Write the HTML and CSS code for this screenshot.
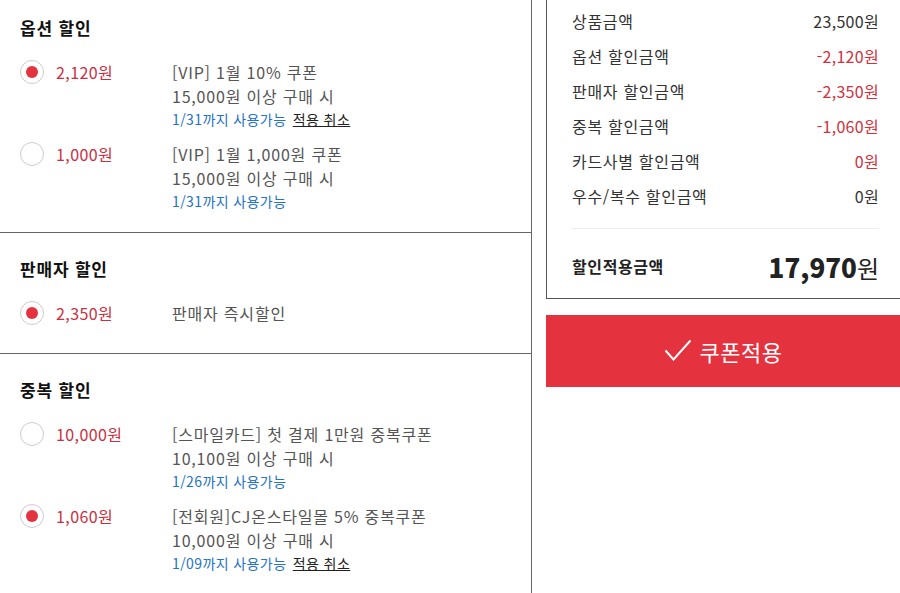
FILE: index.html
```html
<!DOCTYPE html>
<html lang="ko">
  <head>
    <meta charset="utf-8">
    <title>쿠폰 적용</title>
    <link rel="stylesheet" href="styles.css">
  </head>
  <body>
    <div class="page">
      <div class="coupons">
        <div class="section">
          <h3 class="section-title">옵션 할인</h3>
          <div class="item">
            <span class="radio checked"></span>
            <div class="amount">2,120원</div>
            <div class="desc">
              <div class="desc-name">[VIP] 1월 10% 쿠폰</div>
              <div class="desc-name">15,000원 이상 구매 시</div>
              <div class="desc-date">1/31까지 사용가능 <a class="cancel" href="#">적용 취소</a></div>
            </div>
          </div>
          <div class="item">
            <span class="radio"></span>
            <div class="amount">1,000원</div>
            <div class="desc">
              <div class="desc-name">[VIP] 1월 1,000원 쿠폰</div>
              <div class="desc-name">15,000원 이상 구매 시</div>
              <div class="desc-date">1/31까지 사용가능</div>
            </div>
          </div>
        </div>
        <div class="section">
          <h3 class="section-title">판매자 할인</h3>
          <div class="item">
            <span class="radio checked"></span>
            <div class="amount">2,350원</div>
            <div class="desc">
              <div class="desc-name">판매자 즉시할인</div>
            </div>
          </div>
        </div>
        <div class="section">
          <h3 class="section-title">중복 할인</h3>
          <div class="item">
            <span class="radio"></span>
            <div class="amount">10,000원</div>
            <div class="desc">
              <div class="desc-name">[스마일카드] 첫 결제 1만원 중복쿠폰</div>
              <div class="desc-name">10,100원 이상 구매 시</div>
              <div class="desc-date">1/26까지 사용가능</div>
            </div>
          </div>
          <div class="item">
            <span class="radio checked"></span>
            <div class="amount">1,060원</div>
            <div class="desc">
              <div class="desc-name">[전회원]CJ온스타일몰 5% 중복쿠폰</div>
              <div class="desc-name">10,000원 이상 구매 시</div>
              <div class="desc-date">1/09까지 사용가능 <a class="cancel" href="#">적용 취소</a></div>
            </div>
          </div>
        </div>
      </div>

      <div class="side">
        <div class="summary">
          <ul class="summary-list">
            <li><span>상품금액</span><span>23,500원</span></li>
            <li><span>옵션 할인금액</span><span class="minus">-2,120원</span></li>
            <li><span>판매자 할인금액</span><span class="minus">-2,350원</span></li>
            <li><span>중복 할인금액</span><span class="minus">-1,060원</span></li>
            <li><span>카드사별 할인금액</span><span class="minus">0원</span></li>
            <li><span>우수/복수 할인금액</span><span>0원</span></li>
          </ul>
          <div class="total">
            <span class="total-label">할인적용금액</span>
            <span class="total-price"><strong>17,970</strong>원</span>
          </div>
        </div>
        <button class="apply" type="button">
          <svg class="apply-check" width="28" height="23" viewBox="0 0 28 23">
            <polyline points="1.5,11.5 9.5,20.5 26.5,1.5" fill="none" stroke="#fff" stroke-width="2"/>
          </svg>
          쿠폰적용
        </button>
      </div>
    </div>
  </body>
</html>
```

FILE: styles.css
```css
html, body { margin: 0; padding: 0; background: #fff; overflow: hidden; }
body { font-family: "Noto Sans CJK KR", "Noto Sans", sans-serif; color: #333; }

.page { display: flex; align-items: flex-start; width: 920px; margin-top: -8px; }

/* left: coupon list */
.coupons { width: 531px; border-right: 1px solid #666; min-height: 640px; }
.section { padding: 24px 20px 20px; border-bottom: 1px solid #666; }
.section:last-child { border-bottom: none; }
.section-title { margin: 0 0 20px; font-size: 17px; line-height: 24px; font-weight: bold; color: #111; letter-spacing: 0.8px; }

.item { display: flex; align-items: flex-start; min-height: 32px; }
.item + .item { margin-top: 12px; }

.radio { flex: none; box-sizing: border-box; width: 24px; height: 24px; border: 1px solid #ccc; border-radius: 50%; display: flex; align-items: center; justify-content: center; }
.radio.checked::after { content: ""; width: 12px; height: 12px; border-radius: 50%; background: #e5323f; }

.amount { width: 116px; margin-left: 12px; font-size: 16px; line-height: 24px; color: #c9303f; letter-spacing: 0.4px; }
.desc { font-size: 16px; line-height: 24px; color: #555; letter-spacing: 0.8px; }
.desc-date { font-size: 14px; line-height: 22px; color: #2473c4; letter-spacing: 0.4px; }
.cancel { color: #222; text-decoration: underline; margin-left: 2px; }

/* right: summary */
.side { width: 358px; margin-left: 14px; }
.summary { border: 1px solid #555; border-top: none; padding: 12px 24px 10px 25px; }
.summary-list { list-style: none; margin: 0; padding: 0 0 14px; border-bottom: 1px solid #eee; }
.summary-list li { display: flex; justify-content: space-between; font-size: 16px; line-height: 35px; color: #333; letter-spacing: 0.7px; }
.summary-list li span:last-child { letter-spacing: 0.3px; }
.summary-list .minus { color: #d0313e; }

.total { display: flex; justify-content: space-between; align-items: center; padding-top: 15px; height: 44px; }
.total-label { font-size: 16px; font-weight: bold; color: #222; letter-spacing: 0.6px; }
.total-price { font-size: 24px; color: #222; }
.total-price strong { font-size: 26px; font-weight: 800; }

.apply { display: flex; align-items: center; justify-content: center; gap: 8px; width: 100%; height: 72px; margin-top: 16px; border: none; background: #e5323f; color: #fff; font-family: inherit; font-size: 22px; padding: 0; letter-spacing: 0.5px; }
.apply-check { flex: none; margin-top: -2px; margin-left: -4px; }
```
